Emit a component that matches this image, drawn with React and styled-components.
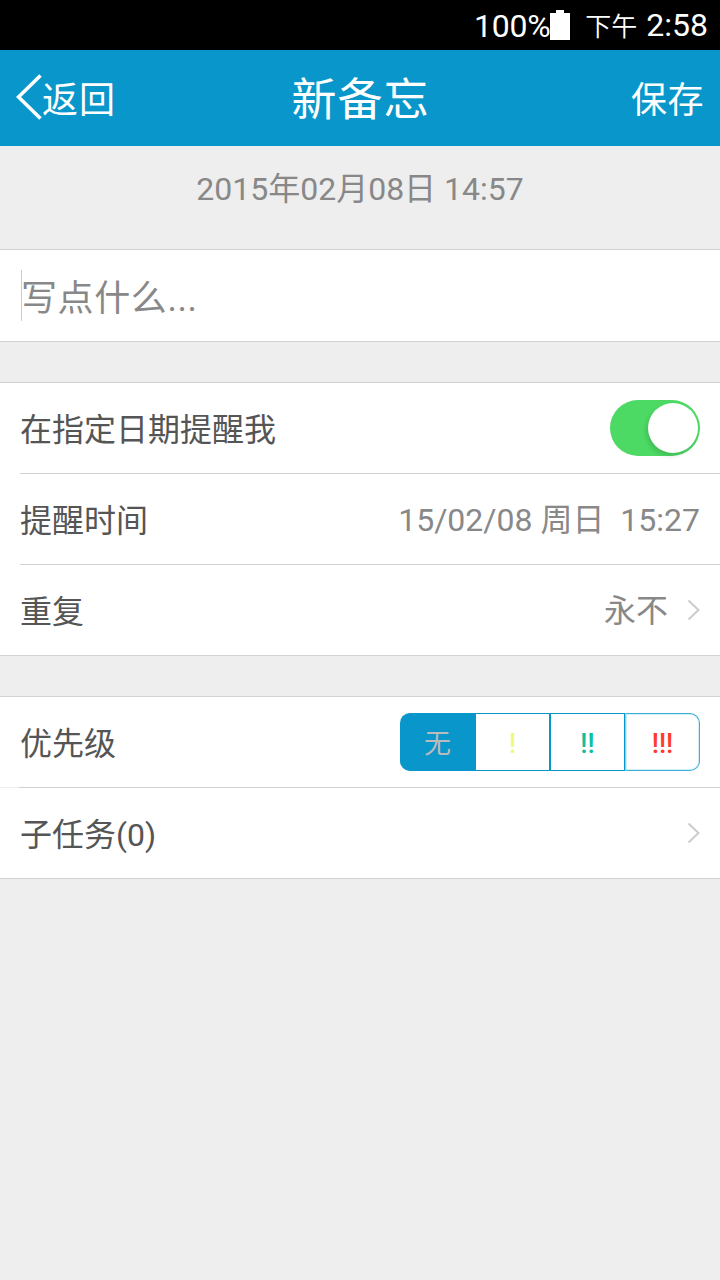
import React from "react";
import styled, { createGlobalStyle, css } from "styled-components";

const blue = "#0896cb";
const line = "#d2d2d2";

const GlobalStyle = createGlobalStyle`
  * {
    box-sizing: border-box;
  }

  body {
    margin: 0;
    background: #eeeeee;
    font-family: Roboto, "Noto Sans CJK SC", sans-serif;
    font-size: 32px;
    color: #555555;
  }
`;

const Screen = styled.div`
  display: flex;
  flex-direction: column;
  width: 720px;
  height: 1280px;
  overflow: hidden;
  background: #eeeeee;
`;

const StatusBar = styled.div`
  display: flex;
  align-items: center;
  justify-content: flex-end;
  height: 50px;
  padding-right: 12px;
  background: #000000;
  color: #ffffff;
  line-height: 50px;
  white-space: nowrap;

  svg {
    margin: 0 15px 0 0;
  }
`;

const Battery = styled.span`
  padding-top: 2px;
  letter-spacing: -0.3px;
`;

const Period = styled.span`
  margin-right: 9px;
  padding-top: 4px;
  font-size: 26px;
  font-weight: 350;
`;

const Header = styled.header`
  display: grid;
  grid-template-columns: 1fr auto 1fr;
  align-items: center;
  height: 96px;
  padding: 0 16px;
  background: ${blue};
  color: #ffffff;
  font-size: 36px;
  line-height: 90px;
`;

const Back = styled.div`
  display: flex;
  align-items: center;
  letter-spacing: 1px;

  svg {
    margin-bottom: 2px;
  }
`;

const Label = styled.span`
  padding-top: 6px;
`;

const Title = styled.div`
  padding: 6px 0 0 1px;
  font-size: 45px;
  letter-spacing: 1px;
`;

const Save = styled.div`
  padding-top: 6px;
  text-align: right;
  letter-spacing: 0.5px;
`;

const Timestamp = styled.div`
  height: 103px;
  color: #888888;
  line-height: 87px;
  text-align: center;
`;

const Group = styled.section`
  margin-bottom: 40px;
  border-top: 1px solid ${line};
  border-bottom: 1px solid ${line};
  background: #ffffff;
`;

const Note = styled.div`
  display: flex;
  align-items: center;
  height: 91px;
  padding-left: 21px;
  color: #888888;
  font-size: 36px;
  letter-spacing: 0.6px;
`;

const NoteText = styled.span`
  padding-bottom: 2px;
`;

const Caret = styled.span`
  width: 1px;
  height: 51px;
  margin-right: -1px;
  background: #cccccc;
`;

const Row = styled.div`
  display: flex;
  align-items: center;
  justify-content: space-between;
  height: 90px;
  margin-left: 20px;
  padding-right: 20px;
  line-height: 86px;
  white-space: pre;

  & + & {
    height: 91px;
    border-top: 1px solid ${line};
  }
`;

const SubtaskRow = styled(Row)`
  && {
    margin-left: 0;
    padding-left: 20px;
    border-top: 1px solid;
    border-image: linear-gradient(to right, #eeeeee 20px, ${line} 20px) 1;
    border-width: 1px 0 0;
    height: 91px;
  }
`;

const RowLabel = styled.span`
  padding-top: 4px;
`;

const Value = styled.span`
  display: flex;
  align-items: center;
  gap: 19px;
  color: #888888;
`;

const ValueText = styled.span`
  padding-top: 2px;
`;

const Switch = styled.span`
  display: flex;
  justify-content: flex-end;
  width: 90px;
  height: 56px;
  padding: 3px 2px;
  border-radius: 28px;
  background: #4cd964;
`;

const Knob = styled.span`
  width: 50px;
  height: 50px;
  border-radius: 50%;
  background: #ffffff;
  box-shadow: -2px 3px 4px rgba(0, 0, 0, 0.13);
`;

const Segments = styled.div`
  display: flex;
  width: 300px;
  height: 58px;
  line-height: 58px;
`;

const Segment = styled.span`
  display: flex;
  justify-content: center;
  width: 75px;
  padding-top: 1px;
  border: 1px solid ${blue};
  border-left-width: 0;
  color: ${props => props.color};
  font-size: 27px;
  font-weight: 500;

  &:first-child {
    width: 76px;
    border-radius: 10px 0 0 10px;
    font-weight: 400;
  }

  &:nth-child(2) {
    width: 74px;
  }

  &:nth-child(3) {
    border-left-width: 1px;
  }

  &:last-child {
    border: 1px solid #3dacd6;
    border-left-color: #8acde6;
    border-radius: 0 10px 10px 0;
    box-shadow: inset 0 0 0 1px #d5edf6;
  }

  ${props =>
    props.$active &&
    css`
      background: ${blue};
    `}
`;

function Chevron() {
  return (
    <svg width="13" height="22" viewBox="0 0 13 22" fill="none">
      <path d="M1.5 1.5 11.5 11 1.5 20.5" stroke="#cccccc" strokeWidth="2" />
    </svg>
  );
}

export default function App() {
  return (
    <Screen>
      <GlobalStyle />
      <StatusBar>
        <Battery>100%</Battery>
        <svg width="20" height="30" viewBox="0 0 20 30" fill="#ffffff">
          <path d="M6 0h8v3h6v27H0V3h6z" />
        </svg>
        <Period>下午</Period>
        2:58
      </StatusBar>
      <Header>
        <Back>
          <svg width="26" height="46" viewBox="0 0 26 46" fill="none">
            <path d="M24.5 1.5 2.5 23l22 21.5" stroke="#ffffff" strokeWidth="3.6" />
          </svg>
          <Label>返回</Label>
        </Back>
        <Title>新备忘</Title>
        <Save>保存</Save>
      </Header>
      <Timestamp>2015年02月08日 14:57</Timestamp>
      <Group>
        <Note>
          <Caret />
          <NoteText>写点什么...</NoteText>
        </Note>
      </Group>
      <Group>
        <Row>
          <RowLabel>在指定日期提醒我</RowLabel>
          <Switch>
            <Knob />
          </Switch>
        </Row>
        <Row>
          <RowLabel>提醒时间</RowLabel>
          <Value>
            <ValueText>{"15/02/08 周日  15:27"}</ValueText>
          </Value>
        </Row>
        <Row>
          <RowLabel>重复</RowLabel>
          <Value>
            <ValueText>永不</ValueText>
            <Chevron />
          </Value>
        </Row>
      </Group>
      <Group>
        <Row>
          <RowLabel>优先级</RowLabel>
          <Segments>
            <Segment $active color="#bbbbbb">
              无
            </Segment>
            <Segment color="#f1fa78">!</Segment>
            <Segment color="#10bfa0">!!</Segment>
            <Segment color="#ff3b30">!!!</Segment>
          </Segments>
        </Row>
        <SubtaskRow>
          <RowLabel>子任务(0)</RowLabel>
          <Chevron />
        </SubtaskRow>
      </Group>
    </Screen>
  );
}
